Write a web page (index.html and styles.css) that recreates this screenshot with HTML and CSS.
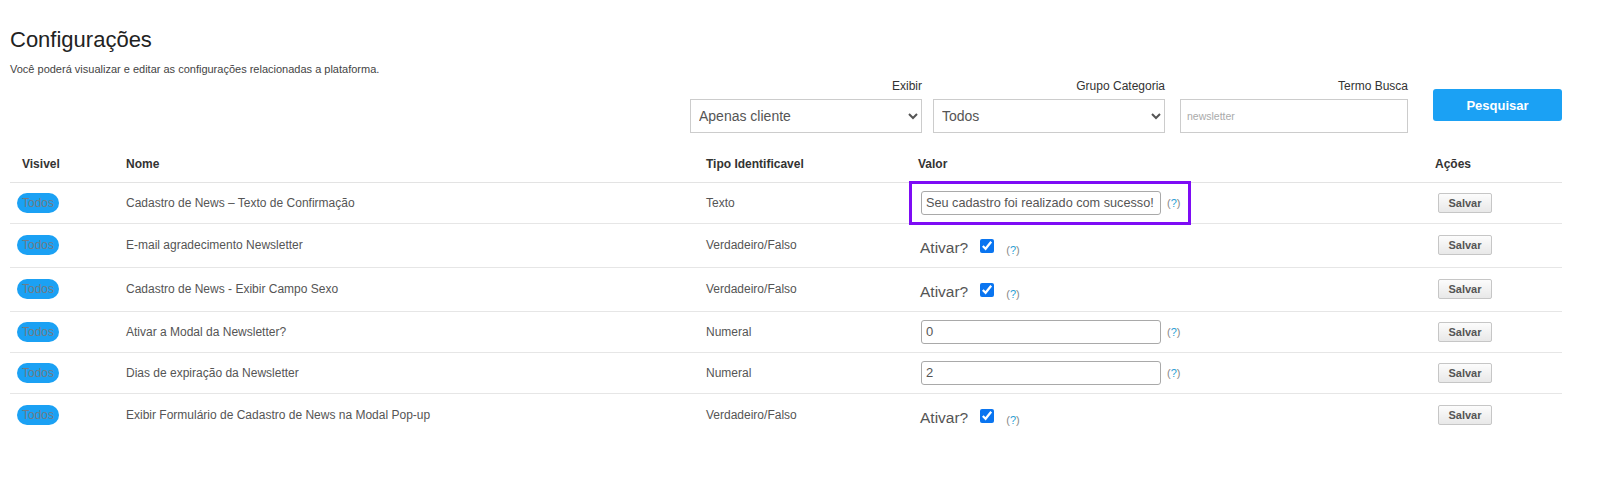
FILE: index.html
```html
<!DOCTYPE html>
<html>
	<head>
		<meta charset="utf-8">
		<title>Configurações</title>
		<link rel="stylesheet" href="styles.css">
	</head>
	<body>
		<div class="page">
			<h1>Configurações</h1>
			<p class="sub">Você poderá visualizar e editar as configurações relacionadas a plataforma.</p>
			<div class="filters">
				<div class="field field-exibir">
					<label>Exibir</label>
					<select><option>Apenas cliente</option></select>
				</div>
				<div class="field field-grupo">
					<label>Grupo Categoria</label>
					<select><option>Todos</option></select>
				</div>
				<div class="field field-termo">
					<label>Termo Busca</label>
					<input type="text" placeholder="newsletter">
				</div>
				<button class="btn-search">Pesquisar</button>
			</div>
			<table class="grid">
				<colgroup>
					<col class="c-vis"><col class="c-nome"><col class="c-tipo"><col class="c-valor"><col class="c-acoes">
				</colgroup>
				<thead>
					<tr><th class="first">Visivel</th><th>Nome</th><th>Tipo Identificavel</th><th>Valor</th><th>Ações</th></tr>
				</thead>
				<tbody>
					<tr>
						<td><span class="pill">Todos</span></td>
						<td>Cadastro de News – Texto de Confirmação</td>
						<td>Texto</td>
						<td>
							<span class="hl">
								<input class="val val-text" type="text" value="Seu cadastro foi realizado com sucesso!">
								<span class="help">(<b>?</b>)</span>
							</span>
						</td>
						<td><button class="btn-save">Salvar</button></td>
					</tr>
					<tr class="tall">
						<td><span class="pill">Todos</span></td>
						<td>E-mail agradecimento Newsletter</td>
						<td>Verdadeiro/Falso</td>
						<td><span class="check"><span class="ativar">Ativar?</span><input type="checkbox" checked><span class="help">(<b>?</b>)</span></span></td>
						<td><button class="btn-save">Salvar</button></td>
					</tr>
					<tr class="tall">
						<td><span class="pill">Todos</span></td>
						<td>Cadastro de News - Exibir Campo Sexo</td>
						<td>Verdadeiro/Falso</td>
						<td><span class="check"><span class="ativar">Ativar?</span><input type="checkbox" checked><span class="help">(<b>?</b>)</span></span></td>
						<td><button class="btn-save">Salvar</button></td>
					</tr>
					<tr>
						<td><span class="pill">Todos</span></td>
						<td>Ativar a Modal da Newsletter?</td>
						<td>Numeral</td>
						<td><span class="num"><input class="val" type="text" value="0"><span class="help">(<b>?</b>)</span></span></td>
						<td><button class="btn-save">Salvar</button></td>
					</tr>
					<tr>
						<td><span class="pill">Todos</span></td>
						<td>Dias de expiração da Newsletter</td>
						<td>Numeral</td>
						<td><span class="num"><input class="val" type="text" value="2"><span class="help">(<b>?</b>)</span></span></td>
						<td><button class="btn-save">Salvar</button></td>
					</tr>
					<tr class="tall">
						<td><span class="pill">Todos</span></td>
						<td>Exibir Formulário de Cadastro de News na Modal Pop-up</td>
						<td>Verdadeiro/Falso</td>
						<td><span class="check"><span class="ativar">Ativar?</span><input type="checkbox" checked><span class="help">(<b>?</b>)</span></span></td>
						<td><button class="btn-save">Salvar</button></td>
					</tr>
				</tbody>
			</table>
		</div>
	</body>
</html>
```

FILE: styles.css
```css
* {margin: 0;padding: 0;box-sizing: border-box;}
html,body {width: 100%;height: 100%;background: #fff;}
body {font-family: "Liberation Sans", Arial, sans-serif;color: #333;}
.page {width: 1552px;margin-left: 10px;}

h1 {margin-top: 26px;font-size: 22px;line-height: 28px;font-weight: normal;color: #222;}
.sub {margin-top: 8px;font-size: 11px;line-height: 14px;color: #444;}

/* filtros */
.filters {display: flex;justify-content: flex-end;align-items: flex-start;margin-top: 3px;}
.field {display: flex;flex-direction: column;align-items: stretch;}
.field label {display: block;text-align: right;font-size: 12px;line-height: 14px;color: #333;margin-bottom: 6px;}
.field-exibir {width: 232px;}
.field-grupo {width: 232px;margin-left: 11px;}
.field-termo {width: 228px;margin-left: 15px;}
.field select {height: 34px;border: 1px solid #ccc;border-radius: 0;background: #fff;padding: 0 4px;font-family: inherit;font-size: 14px;color: #555;}
.field input {height: 34px;border: 1px solid #ccc;padding: 0 6px;font-family: inherit;font-size: 10.5px;color: #555;}
.field input::placeholder {color: #aaa;}
.btn-search {width: 129px;height: 32px;margin: 10px 0 0 25px;border: 0;border-radius: 3px;background: #1ba1f4;color: #fff;
				font-family: inherit;font-size: 13px;font-weight: bold;}

/* tabela */
.grid {width: 1552px;table-layout: fixed;border-collapse: collapse;margin-top: 14px;}
.c-vis {width: 108px;}
.c-nome {width: 580px;}
.c-tipo {width: 212px;}
.c-valor {width: 517px;}
.c-acoes {width: 135px;}
.grid th {height: 35px;padding: 0 8px;text-align: left;font-size: 12px;font-weight: bold;color: #333;border-bottom: 1px solid #e3e3e3;}
.grid th.first {padding-left: 12px;}
.grid td {height: 41px;padding: 0 8px;font-size: 12px;color: #555;border-bottom: 1px solid #e6e6e6;vertical-align: middle;}
.grid tr:last-child td {border-bottom: 0;}
.grid td:first-child {padding-left: 7px;}
.grid tr.tall td {height: 44px;}

.pill {display: inline-block;height: 20px;line-height: 20px;padding: 0 5px;border-radius: 10px;background: #1ba1f4;color: #6f7c86;font-size: 12px;}

.val {width: 240px;height: 24px;border: 1px solid #a9a9a9;border-radius: 3px;padding: 0 2px 0 4px;font-family: inherit;font-size: 13px;color: #555;}
.val-text {font-size: 12.7px;}
.num {display: inline-flex;align-items: center;margin-left: 3px;}
.help {font-size: 11px;color: #888;margin-left: 6px;}
.help b {font-weight: normal;color: #2a9fd6;}

.hl {display: inline-flex;align-items: center;border: 3px solid #7e0cf5;padding: 7px 8px 7px 9px;margin: -10px 0 -10px -9px;vertical-align: middle;}

.check {display: inline-flex;align-items: center;margin-left: 2px;padding-top: 5px;}
.ativar {font-size: 15.5px;color: #555;}
.check input {width: 14px;height: 14px;margin: 0 0 4px 12px;accent-color: #0a75f0;}
.check .help {margin-left: 12px;padding-top: 4px;}

.btn-save {margin-left: 3px;width: 54px;height: 20px;border: 1px solid #c6c6c6;border-radius: 2px;background: linear-gradient(#fcfcfc, #e8e8e8);
				font-family: inherit;font-size: 11px;font-weight: bold;color: #555;}
```
